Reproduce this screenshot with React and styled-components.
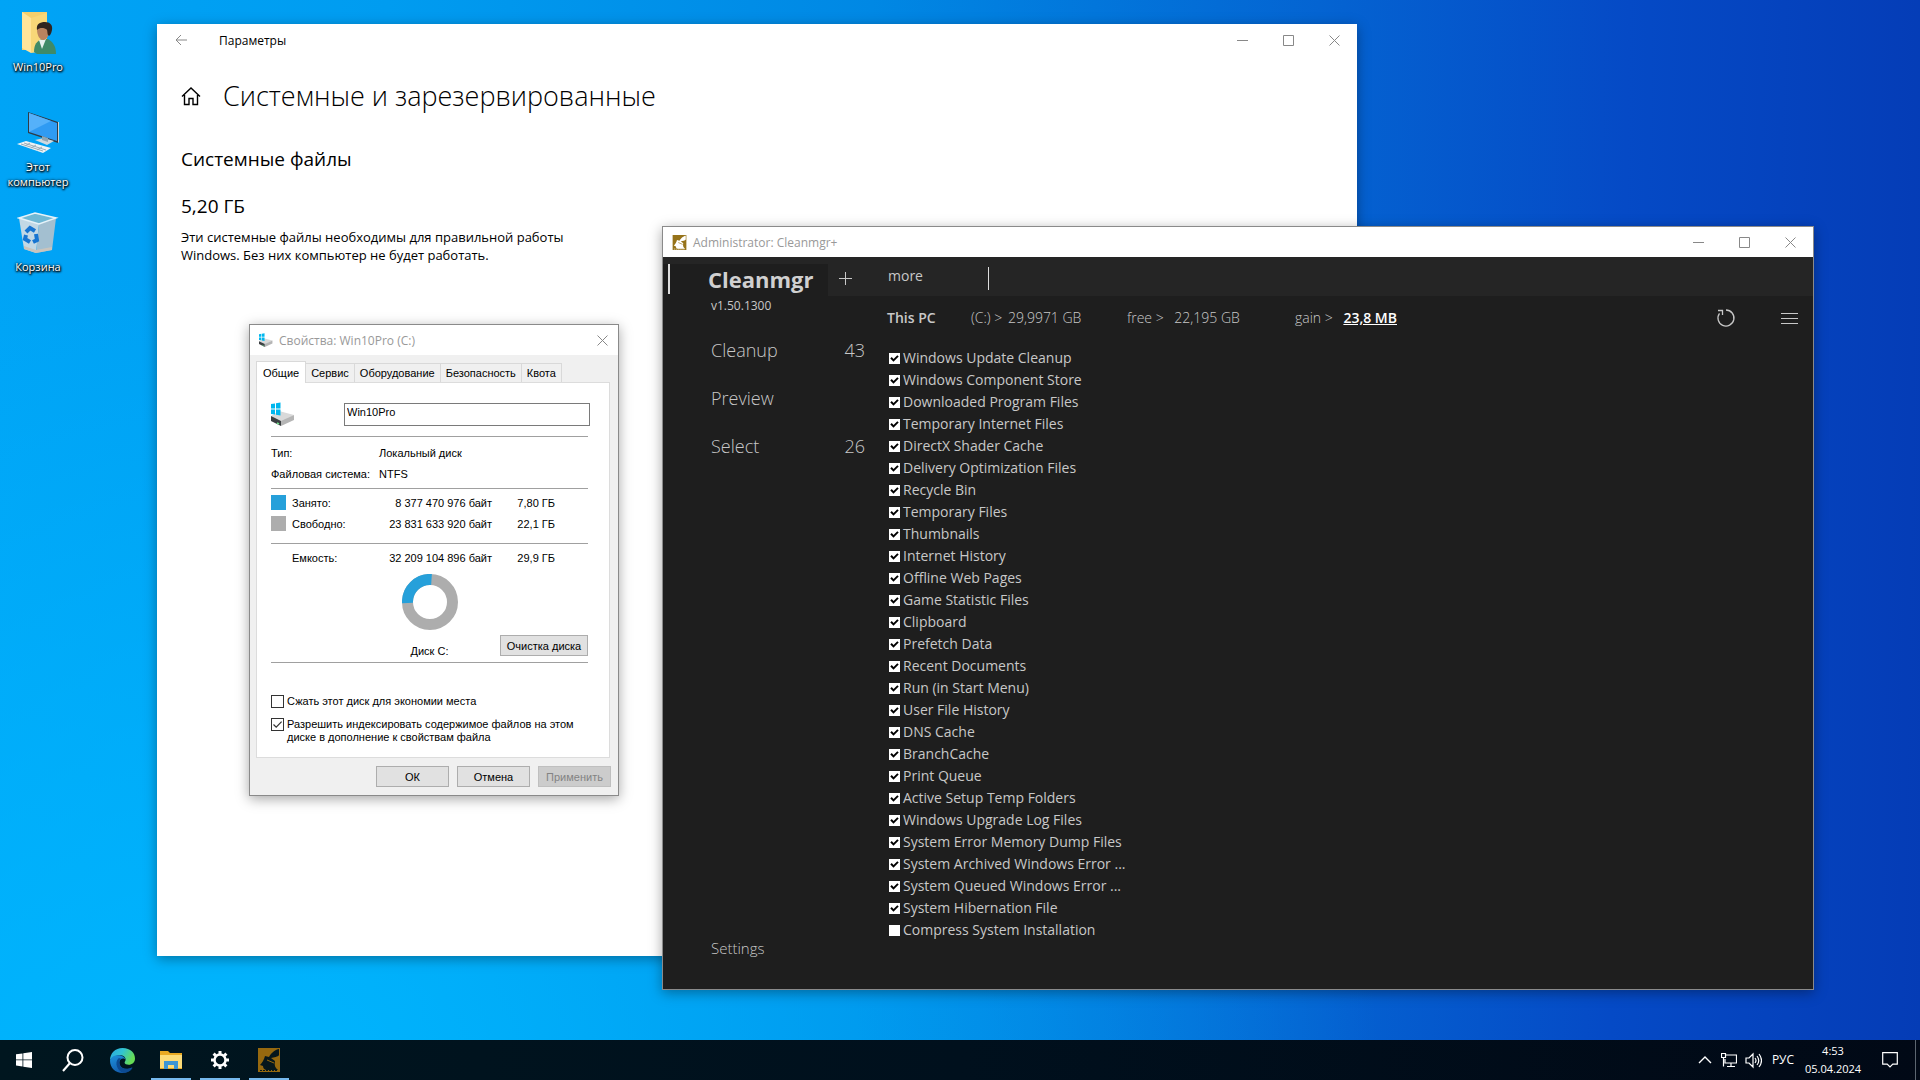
import React, { useState } from "react";
import styled, { createGlobalStyle } from "styled-components";

const uiFont = `"Open Sans", "Noto Sans", sans-serif`;
const dialogFont = `"Liberation Sans", Arial, sans-serif`;

const GlobalStyle = createGlobalStyle`
    * { box-sizing: border-box; }
    body { margin: 0; font-family: ${uiFont}; font-size: 12px; }
    button, input { font: inherit; color: inherit; margin: 0; }
    h1, h2, h3, p, ul { margin: 0; padding: 0; font-weight: 400; }
    ul { list-style: none; }
`;

const Screen = styled.div`
    min-height: 100vh;
    display: grid;
    grid-template-rows: 1fr 40px;
    background:
        radial-gradient(ellipse 60% 75% at 12% 100%, rgba(0, 184, 255, 0.9), rgba(0, 184, 255, 0)),
        linear-gradient(91deg, #00a4f6 0%, #009cf0 20%, #0088e4 45%, #0464d2 68%, #054ac6 84%, #053cb6 100%);
`;

const Desktop = styled.main`
    position: relative;
    min-height: 1000px;
    overflow: hidden;
`;

/* ---- desktop shortcuts ---- */

const Shortcuts = styled.nav`
    display: grid;
    grid-auto-rows: 100px;
    width: 76px;
    padding-top: 12px;
`;

const Shortcut = styled.a`
    display: flex;
    flex-direction: column;
    align-items: center;
    gap: 5px;
    color: #fff;
    text-decoration: none;
    text-align: center;
    font-size: 11px;
    line-height: 15px;
    text-shadow: 0 1px 2px #000, 1px 1px 2px #000, 0 0 3px #000;
`;

/* ---- window frame ---- */

const Window = styled.section`
    position: absolute;
    display: flex;
    flex-direction: column;
    border: 1px solid #8a8a8a;
    box-shadow: 0 3px 12px rgba(0, 0, 0, 0.35);
`;

const TitleBar = styled.header`
    display: flex;
    align-items: center;
    height: ${(p) => p.$height || 30}px;
    background: #fff;
    color: ${(p) => (p.$active ? "#000" : "#999")};
    flex: none;
`;

const TitleText = styled.span`
    flex: 1;
    margin-left: 6px;
    font-size: 12px;
`;

const FrameButton = styled.button`
    width: ${(p) => p.$width || 46}px;
    height: 100%;
    padding: 0;
    display: grid;
    place-items: center;
    border: none;
    background: none;
    color: #888;
`;

/* ---- settings ---- */

const SettingsWindow = styled(Window)`
    left: 157px;
    top: 24px;
    width: 62.5vw;
    height: calc(100vh - 148px);
    background: #fff;
    border: none;
`;

const BackButton = styled(FrameButton)`
    width: 48px;
    margin-right: 8px;
`;

const SettingsBody = styled.div`
    padding: 20px 24px;
    color: #000;
`;

const PageHeading = styled.div`
    display: flex;
    align-items: center;
    gap: 22px;
    height: 40px;

    h1 { font-size: 27px; line-height: 36px; font-weight: 300; }
`;

const SectionTitle = styled.h2`
    margin-top: 30px;
    font-size: 19px;
    line-height: 26px;
`;

const SizeValue = styled.h3`
    margin-top: 21px;
    font-size: 19px;
    line-height: 26px;
`;

const Description = styled.p`
    width: 400px;
    margin-top: 9px;
    font-size: 13px;
    line-height: 18px;
`;

/* ---- drive properties ---- */

const PropertiesWindow = styled(Window)`
    left: 249px;
    top: 324px;
    width: 370px;
    background: #f0f0f0;
    font-family: ${dialogFont};
    font-size: 11px;
    color: #000;

    header { font-family: ${uiFont}; padding-left: 9px; }
`;

const Tabs = styled.div`
    display: flex;
    align-items: flex-end;
    padding: 6px 6px 0;
`;

const Tab = styled.button`
    height: ${(p) => (p.$active ? 22 : 19)}px;
    padding: 0 ${(p) => (p.$active ? 6 : 5)}px;
    margin-bottom: ${(p) => (p.$active ? -1 : 0)}px;
    border: 1px solid #d9d9d9;
    border-bottom: none;
    border-left-width: ${(p) => (p.$active ? 1 : 0)}px;
    background: ${(p) => (p.$active ? "#fff" : "#f0f0f0")};
    white-space: nowrap;
    z-index: 1;
`;

const TabPage = styled.div`
    margin: 0 8px 0 6px;
    height: 376px;
    padding: 19px 21px 0 14px;
    border: 1px solid #dcdcdc;
    background: #fff;
`;

const NameRow = styled.div`
    display: flex;
    align-items: center;
    justify-content: space-between;
    margin-bottom: 10px;
`;

const NameInput = styled.input`
    width: 246px;
    height: 23px;
    margin-right: -2px;
    padding: 0 2px 4px;
    border: 1px solid #7a7a7a;
    border-radius: 0;
    background: #fff;
`;

const Separator = styled.hr`
    margin: 0;
    border: none;
    border-top: 1px solid #a0a0a0;
`;

const Facts = styled.dl`
    display: grid;
    grid-template-columns: 108px 1fr;
    grid-auto-rows: 21px;
    align-items: center;
    margin: 0;
    padding: 5px 0 4px;

    dd { margin: 0; }
`;

const SizeTable = styled.table`
    width: 284px;
    border-collapse: collapse;
    table-layout: fixed;
    margin: ${(p) => (p.$total ? "4px 0 5px" : "4px 0 8px")};

    col:nth-child(1) { width: 21px; }
    col:nth-child(2) { width: 80px; }
    col:nth-child(3) { width: 120px; }
    th { text-align: left; font-weight: 400; }
    th, td { height: 21px; padding: 0 0 2px; white-space: nowrap; }
    td { text-align: right; }
    td:first-child { text-align: left; }
`;

const Swatch = styled.span`
    display: block;
    width: 15px;
    height: 15px;
    background: ${(p) => p.$color};
`;

const ChartRow = styled.div`
    display: grid;
    grid-template-columns: 1fr 58px 1fr;
    justify-items: center;
    align-items: end;
    height: 88px;
`;

const Chart = styled.figure`
    grid-column: 2;
    margin: 0;
    display: flex;
    flex-direction: column;
    align-items: center;
    gap: 14px;

    svg { display: block; }
    figcaption { line-height: 14px; padding-bottom: 4px; }
`;

const ClassicButton = styled.button`
    width: ${(p) => p.$width || 73}px;
    height: 21px;
    padding: 0;
    border: 1px solid #adadad;
    background: #e1e1e1;
    white-space: nowrap;

    &:disabled { background: #ccc; border-color: #bfbfbf; color: #838383; }
`;

const CleanButton = styled(ClassicButton)`
    justify-self: end;
    margin-bottom: 6px;
`;

const Options = styled.div`
    display: grid;
    gap: 10px;
    padding-top: 32px;
`;

const Option = styled.label`
    display: flex;
    align-items: flex-start;
    gap: 3px;
    line-height: 13px;
`;

const OptionBox = styled.input`
    appearance: none;
    flex: none;
    width: 13px;
    height: 13px;
    border: 1px solid #333;
    background: #fff;

    &:checked {
        background: #fff url("data:image/svg+xml,%3Csvg xmlns='http://www.w3.org/2000/svg' viewBox='0 0 11 11'%3E%3Cpath d='M1.5 5.5l2.7 2.7L9.6 2.6' fill='none' stroke='%23333' stroke-width='1.2'/%3E%3C/svg%3E");
    }
`;

const DialogFooter = styled.footer`
    display: flex;
    justify-content: flex-end;
    gap: 8px;
    padding: 8px 7px;
`;

/* ---- cleanmgr ---- */

const CleanmgrWindow = styled(Window)`
    left: 662px;
    top: 226px;
    width: 60vw;
    background: #1e1e1e;
    color: #c8c8c8;
    font-size: 14px;

    > header { padding-left: 9px; }
`;

const Toolbar = styled.div`
    display: flex;
    align-items: flex-end;
    height: 39px;
    background: #252525;
`;

const Brand = styled.div`
    display: flex;
    align-items: center;
    gap: 38px;
    width: 165px;
    height: 32px;
    padding: 0 0 2px 5px;
    background: #1e1e1e;

    h1 { font-size: 22px; line-height: 30px; font-weight: 700; color: #d0d0d0; }
`;

const Caret = styled.span`
    width: ${(p) => p.$width || 1}px;
    height: ${(p) => p.$height}px;
    background: #ddd;
`;

const ToolbarButtons = styled.div`
    flex: 1;
    display: flex;
    align-items: center;
    height: 36px;
`;

const PlainButton = styled.button`
    display: flex;
    align-items: center;
    justify-content: center;
    padding: 0;
    border: none;
    background: none;
    width: ${(p) => (p.$width ? `${p.$width}px` : "auto")};
`;

const MoreButton = styled(PlainButton)`
    width: 100px;
    padding: 0 0 5px 26px;
    justify-content: flex-start;
    margin-right: 26px;
`;

const Columns = styled.div`
    display: grid;
    grid-template-columns: 224px 1fr;
`;

const Sidebar = styled.aside`
    display: flex;
    flex-direction: column;
    padding: 2px 22px 29px 48px;
`;

const Version = styled.span`
    font-size: 12px;
    line-height: 16px;
    margin-bottom: 12px;
`;

const SideItem = styled.button`
    display: flex;
    justify-content: space-between;
    align-items: center;
    height: 48px;
    padding: 0;
    border: none;
    background: none;
    font-size: 18px;
    font-weight: 300;
`;

const SettingsItem = styled(SideItem)`
    height: 24px;
    margin-top: auto;
    font-size: 15px;
`;

const Content = styled.div`
    padding-bottom: 48px;
`;

const DriveInfo = styled.div`
    display: grid;
    grid-template-columns: 84px 156px 168px 1fr auto auto;
    align-items: center;
    height: 51px;
    padding-bottom: 8px;
    font-size: 14px;
    font-weight: 300;
    white-space: nowrap;

    b { font-weight: 600; }
    u { color: #fff; font-weight: 600; margin-left: 7px; }
`;

const Amount = styled.span`
    margin-left: ${(p) => p.$gap}px;
`;

const TaskList = styled.ul`
    padding-left: 2px;
`;

const Task = styled.label`
    display: flex;
    align-items: center;
    gap: 3px;
    height: 22px;
    line-height: 22px;
    white-space: nowrap;
`;

const TaskBox = styled.input`
    appearance: none;
    width: 11px;
    height: 11px;
    background: #fff;

    &:checked {
        background: #fff url("data:image/svg+xml,%3Csvg xmlns='http://www.w3.org/2000/svg' viewBox='0 0 11 11'%3E%3Cpath d='M2 4.8l2.5 2.6L9 2.9' fill='none' stroke='%23000' stroke-width='2'/%3E%3C/svg%3E");
    }
`;

/* ---- taskbar ---- */

const Taskbar = styled.footer`
    display: flex;
    justify-content: space-between;
    background: linear-gradient(90deg, #00161f, #00101d 50%, #010916);
    color: #fff;
`;

const Pinned = styled.div`
    display: flex;
    gap: 1px;
`;

const TaskButton = styled.button`
    position: relative;
    width: 48px;
    padding: 0;
    display: grid;
    place-items: center;
    border: none;
    background: none;

    &::after {
        content: "";
        position: absolute;
        left: 4px;
        right: 4px;
        bottom: 0;
        height: 2px;
        background: ${(p) => (p.$running ? "#76b9ed" : "transparent")};
    }
`;

const Tray = styled.div`
    display: flex;
    align-items: stretch;
`;

const TrayButton = styled.button`
    width: ${(p) => p.$width || 24}px;
    padding: 0;
    display: grid;
    place-items: center;
    border: none;
    background: none;
    font-size: 12px;
    line-height: 18px;
    text-align: center;
`;

const Clock = styled(TrayButton)`
    width: 64px;
    font-size: 11px;
`;

const ShowDesktop = styled.button`
    width: 5px;
    padding: 0;
    border: none;
    border-left: 1px solid #5c6670;
    background: none;
`;

const UserFolderIcon = () => (
    <svg width="42" height="42" viewBox="0 0 42 42">
        <path d="M5 0h25v38H5z" fill="#f5cf6c" />
        <path d="M5 0l9 6v35l-9-5z" fill="#ffe49a" />
        <path d="M14 6l16-5v38l-16 2z" fill="#f8d778" />
        <path d="M17 40c0-8 3-11 8-13h6c5 3 8 7 8 15H20z" fill="#3f8a68" />
        <path d="M22 28l3 9 4-10z" fill="#e7f1ef" />
        <path d="M20 17c0-5 3-6 7-6s6 3 5 9-3 8-6 8-6-4-6-11z" fill="#b9835f" />
        <path d="M20 18c-1-6 3-8 8-8s8 3 7 8-3 7-4 5 0-5-2-6-6-2-9 1z" fill="#30241f" />
    </svg>
);

const ComputerIcon = () => (
    <svg width="42" height="42" viewBox="0 0 42 42">
        <path d="M11 0l30 10v21L11 21z" fill="#303b45" />
        <path d="M12 1l28 10v18L12 20z" fill="#2f9bf3" />
        <path d="M12 1l22 8-22 11z" fill="#55b1fa" />
        <path d="M41 10h1v20l-1 1z" fill="#c5d5df" />
        <path d="M18 28l9-2 10 3-7 4z" fill="#cfd9df" />
        <path d="M25 24l6 2v4l-6-2z" fill="#8fa6b4" />
        <path d="M0 32l9-3 25 7-8 5z" fill="#eef3f5" />
        <path d="M4 32l22 7M7 31l22 7M8 34l5-3M14 36l5-3M20 38l5-3" stroke="#9badb8" strokeWidth="1" />
    </svg>
);

const BinIcon = () => (
    <svg width="42" height="42" viewBox="0 0 42 42">
        <path d="M2 6l20 6-3 29-12-4z" fill="#c2d8e5" />
        <path d="M22 12l17-6-4 32-16 3z" fill="#a3bfd0" />
        <path d="M2 6L18 1l21 5-17 6z" fill="#70b8d4" stroke="#e6f2f8" strokeWidth="1.5" />
        <path d="M7 34l12 4v3L7 37zM19 38l16-3v3l-16 3z" fill="#c9c4bd" />
        <g fill="none" stroke="#1775d1" strokeWidth="4">
            <path d="M9 20l4-4 5 3" />
            <path d="M19 22l1 6-4 2" />
            <path d="M13 30l-5-3 1-4" />
        </g>
    </svg>
);

const DriveIcon = ({ size }) => (
    <svg width={size} height={size} viewBox="0 0 24 24">
        <path d="M0 14l8-5 15 4-13 7z" fill="#d9d9d9" />
        <path d="M0 14l10 5v5L0 19z" fill="#3b3f42" />
        <path d="M10 19l13-6v5l-13 6z" fill="#b5b5b5" />
        <path d="M6 21l2 1" stroke="#6fe08a" strokeWidth="1.5" />
        <path d="M0 2l4-.6v5H0zM5 1.200l4.500-.7v6H5zM0 7.500h4v5l-4-.6zM5 7.500h4.500v6L5 12.700z" fill="#00b7ee" />
    </svg>
);

const BroomIcon = ({ size, base, mark }) => (
    <svg width={size} height={size} viewBox="0 0 24 24">
        <path d="M1 0h22v24H1z" fill={base} />
        <path d="M22 1c-3 0-8 4-10 8l-4-1c-1 4-3 7-5 9l3 1c0 2 1 3 3 4h12c-3-2-4-5-3-9l-4-3c3-1 7-1 8-3z" fill={mark} />
        <path d="M10 12l7 3" stroke={base} strokeWidth="1" />
        <path d="M3 22.500h18" stroke={mark} strokeWidth="1" strokeDasharray="2 1" />
    </svg>
);

const StartIcon = () => (
    <svg width="16" height="16" viewBox="0 0 16 16" fill="#fff">
        <path d="M0 2.300l6.500-.9v6.100H0zM7.300 1.200L16 0v7.500H7.300zM0 8.300h6.500v6.200L0 13.600zM7.300 8.300H16V16l-8.700-1.300z" />
    </svg>
);

const SearchIcon = () => (
    <svg width="22" height="23" viewBox="0 0 22 23" fill="none" stroke="#fff" strokeWidth="2">
        <circle cx="13" cy="8.500" r="7.500" />
        <path d="M8 14L1 22" />
    </svg>
);

const EdgeIcon = () => (
    <svg width="25" height="25" viewBox="0 0 24 24">
        <defs>
            <linearGradient id="edgeTop" x1="0" y1="0" x2="1" y2="0.4">
                <stop offset="0" stopColor="#2ba8e0" />
                <stop offset="0.5" stopColor="#31c3d3" />
                <stop offset="1" stopColor="#66dc55" />
            </linearGradient>
            <linearGradient id="edgeSide" x1="0" y1="0" x2="0.6" y2="1">
                <stop offset="0" stopColor="#1d93dd" />
                <stop offset="1" stopColor="#1257a8" />
            </linearGradient>
        </defs>
        <path d="M0 12C0 5 5 0 12 0c8 0 12 5 12 10 0 4-3 6-6 6-2 0-4-.6-4-1.800C14 13 15 12.500 15 11c0-2-2-4-5.500-4C5 7 1 9.500 0 12z" fill="url(#edgeTop)" />
        <path d="M0 12c1-4 5-5.500 9-5 3 .3 5.500 2 6 4-1-1.500-6-2-6 3 0 5 5 8 12.500 4.500C19.500 22 16 24 12 24 5 24 0 19 0 12z" fill="url(#edgeSide)" />
        <path d="M8 10c-4 4-1 12 5 14 4 0 7-2 8.700-5C15 22 9 19 9 14c0-2 .5-3 2-3.500C10 9.800 9 9.500 8 10z" fill="#0c4a91" />
    </svg>
);

const ExplorerIcon = () => (
    <svg width="22" height="18" viewBox="0 0 22 18">
        <path d="M0 0h8l2 2h12v16H0z" fill="#e8a923" />
        <path d="M0 4h22v13H0z" fill="#fbdb78" />
        <path d="M4 10h14v8h-4v-4H8v4H4z" fill="#3c95d3" />
    </svg>
);

const GearIcon = () => (
    <svg width="20" height="20" viewBox="0 0 20 20" fill="none" stroke="#fff">
        <circle cx="10" cy="10" r="5.500" strokeWidth="2.500" />
        <g strokeWidth="3">
            <path d="M10 1v3M10 16v3M1 10h3M16 10h3M3.600 3.600l2.200 2.200M14.200 14.200l2.200 2.200M3.600 16.400l2.200-2.200M14.200 5.800l2.200-2.200" />
        </g>
    </svg>
);

const LineIcon = ({ size = 11, height, width = 1, children }) => (
    <svg width={size} height={height || size} viewBox={`0 0 ${size} ${height || size}`} fill="none" stroke="currentColor" strokeWidth={width}>
        {children}
    </svg>
);

const CloseIcon = () => <LineIcon><path d="M.5 .5l10 10M10.500 .5l-10 10" /></LineIcon>;

const FrameButtons = () => (
    <>
        <FrameButton aria-label="Свернуть"><LineIcon><path d="M0 5.500h11" /></LineIcon></FrameButton>
        <FrameButton aria-label="Развернуть"><LineIcon><path d="M.5 .5h10v10H.5z" /></LineIcon></FrameButton>
        <FrameButton aria-label="Закрыть"><CloseIcon /></FrameButton>
    </>
);

const tasks = [
    "Windows Update Cleanup",
    "Windows Component Store",
    "Downloaded Program Files",
    "Temporary Internet Files",
    "DirectX Shader Cache",
    "Delivery Optimization Files",
    "Recycle Bin",
    "Temporary Files",
    "Thumbnails",
    "Internet History",
    "Offline Web Pages",
    "Game Statistic Files",
    "Clipboard",
    "Prefetch Data",
    "Recent Documents",
    "Run (in Start Menu)",
    "User File History",
    "DNS Cache",
    "BranchCache",
    "Print Queue",
    "Active Setup Temp Folders",
    "Windows Upgrade Log Files",
    "System Error Memory Dump Files",
    "System Archived Windows Error ...",
    "System Queued Windows Error ...",
    "System Hibernation File",
    "Compress System Installation",
];

const tabs = ["Общие", "Сервис", "Оборудование", "Безопасность", "Квота"];

function Settings() {
    return (
        <SettingsWindow>
            <TitleBar $active $height={32}>
                <BackButton aria-label="Назад">
                    <LineIcon size={12}><path d="M12 6H1M6 1L1 6l5 5" /></LineIcon>
                </BackButton>
                <TitleText>Параметры</TitleText>
                <FrameButtons />
            </TitleBar>
            <SettingsBody>
                <PageHeading>
                    <LineIcon size={20} width={1.4}>
                        <path d="M1 10.500L10 2l9 8.500M3.500 9v9.500h4.500v-6h4v6h4.500V9" />
                    </LineIcon>
                    <h1>Системные и зарезервированные</h1>
                </PageHeading>
                <SectionTitle>Системные файлы</SectionTitle>
                <SizeValue>5,20 ГБ</SizeValue>
                <Description>
                    Эти системные файлы необходимы для правильной работы Windows. Без них компьютер не будет работать.
                </Description>
            </SettingsBody>
        </SettingsWindow>
    );
}

function Properties() {
    return (
        <PropertiesWindow>
            <TitleBar>
                <DriveIcon size={14} />
                <TitleText>Свойства: Win10Pro (C:)</TitleText>
                <FrameButton $width={31} aria-label="Закрыть"><CloseIcon /></FrameButton>
            </TitleBar>
            <Tabs role="tablist">
                {tabs.map((name, i) => (
                    <Tab key={name} role="tab" $active={i === 0}>{name}</Tab>
                ))}
            </Tabs>
            <TabPage>
                <NameRow>
                    <DriveIcon size={24} />
                    <NameInput type="text" aria-label="Метка тома" defaultValue="Win10Pro" />
                </NameRow>
                <Separator />
                <Facts>
                    <dt>Тип:</dt>
                    <dd>Локальный диск</dd>
                    <dt>Файловая система:</dt>
                    <dd>NTFS</dd>
                </Facts>
                <Separator />
                <SizeTable>
                    <colgroup><col /><col /><col /><col /></colgroup>
                    <tbody>
                        <tr>
                            <td><Swatch $color="#26a0da" /></td>
                            <th scope="row">Занято:</th>
                            <td>8 377 470 976 байт</td>
                            <td>7,80 ГБ</td>
                        </tr>
                        <tr>
                            <td><Swatch $color="#adadad" /></td>
                            <th scope="row">Свободно:</th>
                            <td>23 831 633 920 байт</td>
                            <td>22,1 ГБ</td>
                        </tr>
                    </tbody>
                </SizeTable>
                <Separator />
                <SizeTable $total>
                    <colgroup><col /><col /><col /><col /></colgroup>
                    <tbody>
                        <tr>
                            <td />
                            <th scope="row">Емкость:</th>
                            <td>32 209 104 896 байт</td>
                            <td>29,9 ГБ</td>
                        </tr>
                    </tbody>
                </SizeTable>
                <ChartRow>
                    <Chart>
                        <svg width="56" height="56" viewBox="0 0 56 56" fill="none" strokeWidth="11">
                            <circle cx="28" cy="28" r="22.500" stroke="#adadad" />
                            <path d="M5.500 29A22.500 22.500 0 0 1 29.500 5.500" stroke="#26a0da" />
                        </svg>
                        <figcaption>Диск C:</figcaption>
                    </Chart>
                    <CleanButton $width={88}>Очистка диска</CleanButton>
                </ChartRow>
                <Separator />
                <Options>
                    <Option>
                        <OptionBox type="checkbox" />
                        Сжать этот диск для экономии места
                    </Option>
                    <Option>
                        <OptionBox type="checkbox" defaultChecked />
                        Разрешить индексировать содержимое файлов на этом диске в дополнение к свойствам файла
                    </Option>
                </Options>
            </TabPage>
            <DialogFooter>
                <ClassicButton>ОК</ClassicButton>
                <ClassicButton>Отмена</ClassicButton>
                <ClassicButton disabled>Применить</ClassicButton>
            </DialogFooter>
        </PropertiesWindow>
    );
}

function Cleanmgr() {
    const [checked, setChecked] = useState(tasks.map((_, i) => i < tasks.length - 1));

    const toggle = (index) => {
        setChecked((prev) => prev.map((value, i) => (i === index ? !value : value)));
    };

    return (
        <CleanmgrWindow>
            <TitleBar>
                <BroomIcon size={15} base="#96731a" mark="#fff" />
                <TitleText>Administrator: Cleanmgr+</TitleText>
                <FrameButtons />
            </TitleBar>
            <Toolbar>
                <Brand>
                    <Caret $width={2} $height={30} />
                    <h1>Cleanmgr</h1>
                </Brand>
                <ToolbarButtons>
                    <PlainButton $width={34} aria-label="Add">
                        <LineIcon size={13}><path d="M6.500 0v13M0 6.500h13" /></LineIcon>
                    </PlainButton>
                    <MoreButton>more</MoreButton>
                    <Caret $height={23} />
                </ToolbarButtons>
            </Toolbar>
            <Columns>
                <Sidebar>
                    <Version>v1.50.1300</Version>
                    <SideItem>Cleanup <span>43</span></SideItem>
                    <SideItem>Preview</SideItem>
                    <SideItem>Select <span>26</span></SideItem>
                    <SettingsItem>Settings</SettingsItem>
                </Sidebar>
                <Content>
                    <DriveInfo>
                        <b>This PC</b>
                        <span>(C:) &gt; <Amount $gap={2}>29,9971 GB</Amount></span>
                        <span>free &gt; <Amount $gap={7}>22,195 GB</Amount></span>
                        <span>gain &gt; <u>23,8 MB</u></span>
                        <PlainButton $width={78} aria-label="Refresh">
                            <LineIcon size={20} width={1.3}>
                                <path d="M10 2a8 8 0 1 1-6.500 3.300M2 2.500h4.500V7" />
                            </LineIcon>
                        </PlainButton>
                        <PlainButton $width={48} aria-label="Menu">
                            <LineIcon size={17} height={12}><path d="M0 1.500h17M0 6.500h17M0 11.500h17" /></LineIcon>
                        </PlainButton>
                    </DriveInfo>
                    <TaskList>
                        {tasks.map((name, i) => (
                            <li key={name}>
                                <Task>
                                    <TaskBox type="checkbox" checked={checked[i]} onChange={() => toggle(i)} />
                                    {name}
                                </Task>
                            </li>
                        ))}
                    </TaskList>
                </Content>
            </Columns>
        </CleanmgrWindow>
    );
}

function App() {
    return (
        <Screen>
            <GlobalStyle />
            <Desktop>
                <Shortcuts>
                    <Shortcut href="#user"><UserFolderIcon />Win10Pro</Shortcut>
                    <Shortcut href="#computer"><ComputerIcon />Этот компьютер</Shortcut>
                    <Shortcut href="#bin"><BinIcon />Корзина</Shortcut>
                </Shortcuts>
                <Settings />
                <Properties />
                <Cleanmgr />
            </Desktop>
            <Taskbar>
                <Pinned>
                    <TaskButton aria-label="Пуск"><StartIcon /></TaskButton>
                    <TaskButton aria-label="Поиск"><SearchIcon /></TaskButton>
                    <TaskButton aria-label="Edge"><EdgeIcon /></TaskButton>
                    <TaskButton $running aria-label="Проводник"><ExplorerIcon /></TaskButton>
                    <TaskButton $running aria-label="Параметры"><GearIcon /></TaskButton>
                    <TaskButton $running aria-label="Cleanmgr+"><BroomIcon size={24} base="#96690f" mark="#06171c" /></TaskButton>
                </Pinned>
                <Tray>
                    <TrayButton aria-label="Скрытые значки">
                        <LineIcon size={14} width={1.4}><path d="M1 10l6-6 6 6" /></LineIcon>
                    </TrayButton>
                    <TrayButton aria-label="Сеть">
                        <LineIcon size={16} width={1.2}><path d="M5 3h10.500v8H4V7M.5 1.500h4v4h-4zM2.500 5.500v9M10 11v3.500M6 14.500h8" /></LineIcon>
                    </TrayButton>
                    <TrayButton aria-label="Громкость">
                        <LineIcon size={17} width={1.2}><path d="M1 6v5h3l4 4V2L4 6zM10 6q2 2.500 0 5M12 4q3.500 4.500 0 9M14 2q5 6.500 0 13" /></LineIcon>
                    </TrayButton>
                    <TrayButton $width={36}>РУС</TrayButton>
                    <Clock><span>4:53<br />05.04.2024</span></Clock>
                    <TrayButton $width={50} aria-label="Уведомления">
                        <LineIcon size={16} width={1.2}><path d="M.7 .7h14.600v11.500h-4.500L8 15l-2.800-2.800H.7z" /></LineIcon>
                    </TrayButton>
                    <ShowDesktop aria-label="Показать рабочий стол" />
                </Tray>
            </Taskbar>
        </Screen>
    );
}

export default App;
